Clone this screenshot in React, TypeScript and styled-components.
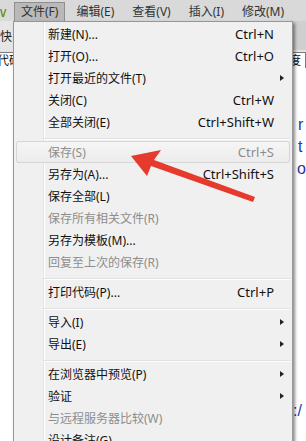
import React from 'react';
import styled, {createGlobalStyle} from "styled-components";

const GlobalStyle = createGlobalStyle`
  html, body {
    margin: 0;
    padding: 0;
    background: #fff;
    overflow: hidden;
  }
`

const Frame = styled.div`
  position: relative;
  width: 306px;
  height: 441px;
  overflow: hidden;
  display: flex;
  flex-direction: column;
  background: #fff;
  font-family: "Noto Sans", "Noto Sans CJK SC", sans-serif;
  font-size: 12px;
`
const MenuBar = styled.div`
  height: 21px;
  padding-top: 2px;
  box-sizing: border-box;
  display: flex;
  align-items: stretch;
  background: #d9d9d9;
  flex-shrink: 0;
`
const Logo = styled.div`
  width: 14px;
  display: flex;
  align-items: center;

  svg {
    display: block;
  }
`
const MenuTitle = styled.div<{ $active?: boolean }>`
  padding: 0 6px;
  margin-right: 4px;
  line-height: 18px;
  color: #333;
  border: 1px solid ${p => p.$active ? '#8f8f8f' : 'transparent'};
  border-bottom: none;
  background: ${p => p.$active ? '#b9b9b9' : 'transparent'};
  white-space: nowrap;
`
const Toolbar = styled.div`
  height: 29px;
  display: flex;
  flex-shrink: 0;
`
const ToolCell = styled.div<{ $bg: string }>`
  flex: 1;
  display: flex;
  align-items: center;
  background: ${p => p.$bg};
  color: #222;
  font-size: 12px;
`
const TabRow = styled.div`
  height: 18px;
  display: flex;
  justify-content: space-between;
  background: #e4e4e4;
  flex-shrink: 0;
`
const Tab = styled.div<{ $shift: number }>`
  margin-top: 2px;
  margin-left: ${p => p.$shift}px;
  padding: 0 4px;
  line-height: 15px;
  background: #fff;
  border: 1px solid #7a7a7a;
  border-bottom: none;
  color: #111;
`
const Editor = styled.div`
  flex: 1;
  display: grid;
  grid-template-columns: 1fr 13px;
`
const Code = styled.div`
  grid-column: 2;
  padding-top: 2px;
  font-family: "Liberation Sans", sans-serif;
  font-size: 16px;
  color: #2637a6;
`
const CodeLine = styled.div<{ $indent: number }>`
  height: 22px;
  line-height: 22px;
  padding-left: ${p => p.$indent}px;
  white-space: pre;
`
const Menu = styled.div`
  position: absolute;
  left: 13px;
  top: 21px;
  width: 280px;
  height: 440px;
  box-sizing: border-box;
  padding: 1px 2px;
  border: 1px solid #979797;
  border-bottom: none;
  background: linear-gradient(to right, #f0f0f0 0 29px, #e2e3e3 29px 30px, #fff 30px 31px, #f0f0f0 31px);
  box-shadow: 2px 2px 3px rgba(0, 0, 0, 0.45);
`
const Item = styled.div<{ $disabled?: boolean; $hover?: boolean }>`
  height: 22px;
  display: grid;
  grid-template-columns: 1fr auto 16px;
  align-items: center;
  padding-left: 32px;
  color: ${p => p.$disabled ? '#8d8d8d' : '#111'};
  border-radius: 3px;
  background: ${p => p.$hover ? 'linear-gradient(#f6f6f6, #ebebeb)' : 'transparent'};
  box-shadow: ${p => p.$hover ? 'inset 0 0 0 1px #d6d6d6' : 'none'};
  white-space: nowrap;
`
const Shortcut = styled.span`
  font-size: 13px;
  text-align: right;
`
const Arrow = styled.span`
  justify-self: start;
  margin-left: 6px;
  width: 0;
  height: 0;
  border-left: 4px solid #222;
  border-top: 3.5px solid transparent;
  border-bottom: 3.5px solid transparent;
`
const Separator = styled.div`
  height: 8px;
  margin-left: 28px;
  box-sizing: border-box;
  padding-top: 5px;

  &::after {
    content: '';
    display: block;
    height: 1px;
    border-top: 1px solid #e0e0e0;
    background: #fff;
  }
`
const Overlay = styled.svg`
  position: absolute;
  left: 0;
  top: 0;
  pointer-events: none;
`

type Entry = { label: string; key?: string; sub?: boolean; disabled?: boolean; hover?: boolean } | 'sep'

const entries: Entry[] = [
    {label: '新建(N)...', key: 'Ctrl+N'},
    {label: '打开(O)...', key: 'Ctrl+O'},
    {label: '打开最近的文件(T)', sub: true},
    {label: '关闭(C)', key: 'Ctrl+W'},
    {label: '全部关闭(E)', key: 'Ctrl+Shift+W'},
    'sep',
    {label: '保存(S)', key: 'Ctrl+S', disabled: true, hover: true},
    {label: '另存为(A)...', key: 'Ctrl+Shift+S'},
    {label: '保存全部(L)'},
    {label: '保存所有相关文件(R)', disabled: true},
    {label: '另存为模板(M)...'},
    {label: '回复至上次的保存(R)', disabled: true},
    'sep',
    {label: '打印代码(P)...', key: 'Ctrl+P'},
    'sep',
    {label: '导入(I)', sub: true},
    {label: '导出(E)', sub: true},
    'sep',
    {label: '在浏览器中预览(P)', sub: true},
    {label: '验证', sub: true},
    {label: '与远程服务器比较(W)', disabled: true},
    {label: '设计备注(G)...'},
]

const titles = ['文件(F)', '编辑(E)', '查看(V)', '插入(I)', '修改(M)']

const codeLines: { text: string; indent: number }[] = Array.from({length: 16}, (_, i) => {
    if (i === 2) return {text: 'r', indent: 5}
    if (i === 3) return {text: 't', indent: 5}
    if (i === 4) return {text: 'o', indent: 4}
    if (i === 15) return {text: ':/', indent: 0}
    return {text: '', indent: 0}
})

const App: React.FC = () => {
    return (
        <Frame>
            <GlobalStyle/>
            <MenuBar>
                <Logo>
                    <svg width="7" height="12" viewBox="0 0 7 12">
                        <path d="M0 3 L2 11 L4 11 L6.5 3 L5 3 L3 9 L1.6 3 Z" fill="#5f9a32"/>
                    </svg>
                </Logo>
                {titles.map((t, i) => (
                    <MenuTitle key={t} $active={i === 0}>{t}</MenuTitle>
                ))}
            </MenuBar>
            <Toolbar>
                <ToolCell $bg="#e6e6e6">快</ToolCell>
                <ToolCell $bg="#cfcfcf"/>
            </Toolbar>
            <TabRow>
                <Tab $shift={-8}>代码</Tab>
                <Tab $shift={0}>度</Tab>
            </TabRow>
            <Editor>
                <Code>
                    {codeLines.map((l, i) => (
                        <CodeLine key={i} $indent={l.indent}>{l.text}</CodeLine>
                    ))}
                </Code>
            </Editor>

            <Menu>
                {entries.map((e, i) => e === 'sep' ? (
                    <Separator key={i}/>
                ) : (
                    <Item key={i} $disabled={e.disabled} $hover={e.hover}>
                        <span>{e.label}</span>
                        <Shortcut>{e.key}</Shortcut>
                        {e.sub ? <Arrow/> : <span/>}
                    </Item>
                ))}
            </Menu>

            <Overlay width="306" height="441" viewBox="0 0 306 441">
                <path d="M131 156 L161 150 L154 160 L255 197 L253 202 L151 166 L147 176 Z" fill="#e53a2c"/>
            </Overlay>
        </Frame>
    );
};

export default App;
